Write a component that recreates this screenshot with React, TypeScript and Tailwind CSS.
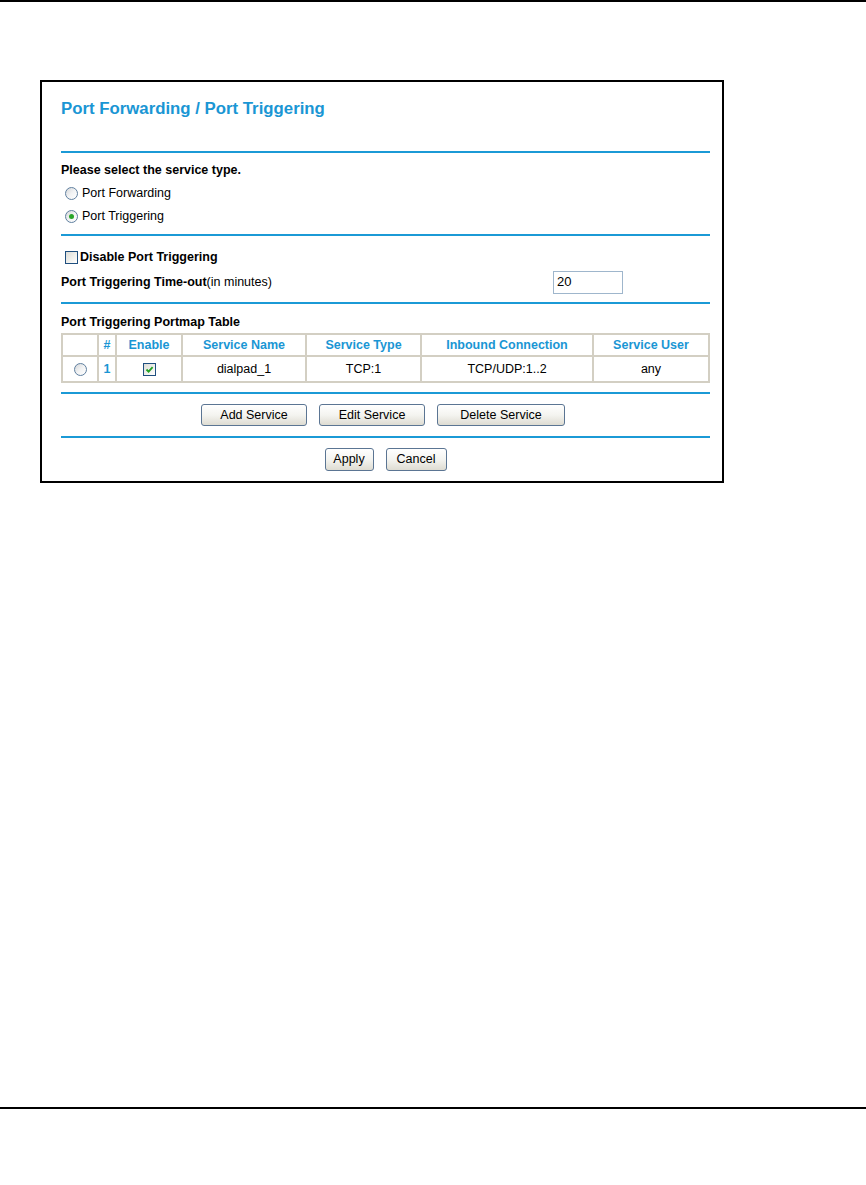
import React from 'react'

const font = { fontFamily: '"Liberation Sans", Arial, sans-serif' }

function Rule() {
  return <div className="h-[2px] bg-[#1b9ad6]" />
}

function Radio({ checked }: { checked?: boolean }) {
  return (
    <span className="relative inline-flex h-[13px] w-[13px] shrink-0 items-center justify-center rounded-full border border-[#5f7f9f] bg-gradient-to-br from-[#d4d6d8] via-[#f2f3f4] to-white">
      {checked && <span className="h-[5px] w-[5px] rounded-full bg-[#2aa52a]" />}
    </span>
  )
}

function Checkbox({ checked }: { checked?: boolean }) {
  return (
    <span className="inline-flex h-[13px] w-[13px] shrink-0 items-center justify-center border border-[#1f4f7f] bg-gradient-to-br from-[#dcdcd6] via-[#eeeeea] to-white">
      {checked && (
        <svg width="9" height="9" viewBox="0 0 9 9">
          <path d="M1.5 4.5 L3.6 6.6 L7.6 2.2" fill="none" stroke="#21a121" strokeWidth="1.8" />
        </svg>
      )}
    </span>
  )
}

function XpButton({ children, className }: { children: React.ReactNode; className: string }) {
  return (
    <button
      type="button"
      className={`flex h-[22px] items-center justify-center rounded-[3px] border border-[#5b7593] bg-gradient-to-b from-white via-[#f4f4f0] to-[#dedcd2] text-[12.5px] text-black ${className}`}
    >
      {children}
    </button>
  )
}

const cols = ['', '#', 'Enable', 'Service Name', 'Service Type', 'Inbound Connection', 'Service User']

export default function App() {
  return (
    <div className="min-h-[1185px] w-[866px] bg-white text-black" style={font}>
      <div className="h-[2px] bg-black" />

      <div className="ml-[40px] mt-[78px] w-[684px] border-2 border-black pb-[10px] pl-[19px] pr-[12px] pt-[17px]">
        <h1 className="h-[20px] text-[16.8px] font-bold leading-[20px] text-[#1a96d4]">
          Port Forwarding / Port Triggering
        </h1>

        <div className="mt-[32px]">
          <Rule />
        </div>

        <p className="mt-[9px] h-[16px] text-[12.5px] font-bold leading-[16px]">Please select the service type.</p>
        <div className="mt-[4px] flex flex-col">
          <label className="flex h-[23px] items-center gap-[4px] pl-[4px] text-[12.5px]">
            <Radio />
            Port Forwarding
          </label>
          <label className="flex h-[23px] items-center gap-[4px] pl-[4px] text-[12.5px]">
            <Radio checked />
            Port Triggering
          </label>
        </div>

        <div className="mt-[6px]">
          <Rule />
        </div>

        <label className="mt-[10px] flex h-[22px] items-center gap-[2px] pl-[4px] text-[12.5px] font-bold">
          <Checkbox />
          Disable Port Triggering
        </label>

        <div className="mt-[2px] flex h-[24px] items-center">
          <span className="w-[492px] text-[12.5px]">
            <b>Port Triggering Time-out</b>(in minutes)
          </span>
          <div className="flex h-[23px] w-[70px] items-center border border-[#9fb6cc] px-[3px] text-[13px]">20</div>
        </div>

        <div className="mt-[8px]">
          <Rule />
        </div>

        <p className="mt-[10px] h-[16px] text-[12.5px] font-bold leading-[16px]">Port Triggering Portmap Table</p>

        <div className="mt-[3px] border-2 border-[#d3cfc3] text-[12.5px]">
          <div className="grid grid-cols-[34px_18px_66px_124px_115px_172px_116px] border-b-2 border-[#d3cfc3]">
            {cols.map((c, i) => (
              <div
                key={i}
                className={`flex h-[20px] items-center justify-center font-bold text-[#1a96d4] ${i > 0 ? 'border-l-2 border-[#d3cfc3]' : ''}`}
              >
                {c}
              </div>
            ))}
          </div>
          <div className="grid h-[24px] grid-cols-[34px_18px_66px_124px_115px_172px_116px]">
            <div className="flex items-center justify-center">
              <Radio />
            </div>
            <div className="flex items-center justify-center border-l-2 border-[#d3cfc3] font-bold text-[#1a96d4]">1</div>
            <div className="flex items-center justify-center border-l-2 border-[#d3cfc3]">
              <Checkbox checked />
            </div>
            <div className="flex items-center justify-center border-l-2 border-[#d3cfc3]">dialpad_1</div>
            <div className="flex items-center justify-center border-l-2 border-[#d3cfc3]">TCP:1</div>
            <div className="flex items-center justify-center border-l-2 border-[#d3cfc3]">TCP/UDP:1..2</div>
            <div className="flex items-center justify-center border-l-2 border-[#d3cfc3]">any</div>
          </div>
        </div>

        <div className="mt-[9px]">
          <Rule />
        </div>

        <div className="mt-[10px] flex justify-center gap-[12px] pr-[5px]">
          <XpButton className="w-[106px]">Add Service</XpButton>
          <XpButton className="w-[106px]">Edit Service</XpButton>
          <XpButton className="w-[128px]">Delete Service</XpButton>
        </div>

        <div className="mt-[10px]">
          <Rule />
        </div>

        <div className="mt-[10px] flex justify-center gap-[12px]">
          <XpButton className="h-[23px] w-[49px]">Apply</XpButton>
          <XpButton className="h-[23px] w-[61px]">Cancel</XpButton>
        </div>
      </div>

      <div className="mt-[624px] h-[2px] bg-black" />
    </div>
  )
}
